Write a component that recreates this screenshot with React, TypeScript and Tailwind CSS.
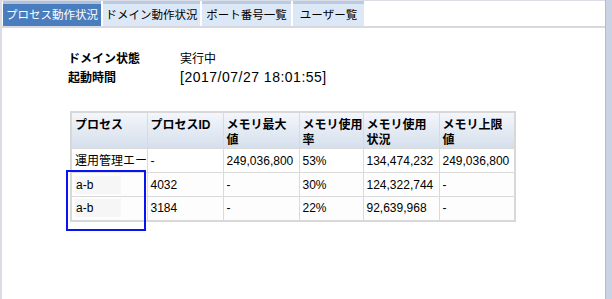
import React from "react";

const tabs = ["プロセス動作状況", "ドメイン動作状況", "ポート番号一覧", "ユーザー覧"];
const tabW = ["w-[98px]", "w-[97px]", "w-[89px]", "w-[71px]"];

const headers = [
  ["プロセス"],
  ["プロセスID"],
  ["メモリ最大", "値"],
  ["メモリ使用", "率"],
  ["メモリ使用", "状況"],
  ["メモリ上限", "値"],
];

const rows: { cells: string[]; mask?: boolean }[] = [
  { cells: ["運用管理エー", "-", "249,036,800", "53%", "134,474,232", "249,036,800"] },
  { cells: ["a-b", "4032", "-", "30%", "124,322,744", "-"], mask: true },
  { cells: ["a-b", "3184", "-", "22%", "92,639,968", "-"], mask: true },
];

const colW = ["w-[76px]", "w-[76px]", "w-[76px]", "w-[64px]", "w-[76px]", "w-[76px]"];

export default function App() {
  return (
    <div
      className="w-[612px] h-[299px] bg-white flex text-black relative overflow-hidden"
      style={{ fontFamily: '"Liberation Sans", "Noto Sans CJK JP", sans-serif' }}
    >
      <div className="flex-1 flex flex-col border-l-2 border-t border-[#dcdce4]">
        <div className="h-[27px] flex items-end pl-[1px] gap-[2px] border-b-2 border-[#d8d8e0] pt-[2px]">
          {tabs.map((t, i) => (
            <div
              key={t}
              className={`${tabW[i]} h-[25px] flex flex-col ${i === 0 ? "bg-[#4a7dbd] text-white" : "bg-[#dde8f6] text-black"}`}
            >
              <div className={`h-[3px] ${i === 0 ? "bg-[#aec3df]" : "bg-[#b7cbe4]"}`} />
              <div className="flex-1 flex items-center justify-center text-[11.5px] leading-none whitespace-nowrap pt-[1px]">
                {t}
              </div>
            </div>
          ))}
        </div>
        <div className="pl-[66px] pt-[21px] text-[12px]">
          <div className="flex h-[19px] items-center">
            <div className="w-[112px] font-bold">ドメイン状態</div>
            <div>実行中</div>
          </div>
          <div className="flex h-[19px] items-center">
            <div className="w-[112px] font-bold">起動時間</div>
            <div className="text-[14px] tracking-[0.5px]">[2017/07/27 18:01:55]</div>
          </div>
          <table className="mt-[24px] ml-[2px] w-[446px] table-fixed border-collapse border-2 border-[#d8d8d8] text-[12px]">
            <colgroup>
              {colW.map((w, i) => (
                <col key={i} className={w} />
              ))}
            </colgroup>
            <thead>
              <tr className="h-[35px]">
                {headers.map((h, i) => (
                  <th
                    key={i}
                    className="align-top text-left font-bold border border-[#dadada] bg-gradient-to-b from-[#f3f6fb] to-[#d5dfec] px-[3px] pt-[5px] leading-[15px]"
                  >
                    {h.map((l, j) => (
                      <div key={j} className="whitespace-nowrap">{l}</div>
                    ))}
                  </th>
                ))}
              </tr>
            </thead>
            <tbody>
              {rows.map((r, ri) => (
                <tr key={ri} className={`h-[24px] ${ri > 0 ? "bg-[#fdfdfd]" : "bg-white"}`}>
                  {r.cells.map((c, ci) => (
                    <td
                      key={ci}
                      className="border border-[#dadada] px-[3px] whitespace-nowrap overflow-hidden"
                    >
                      {ci === 0 && r.mask ? (
                        <span className="inline-block w-[46px] bg-[#f6f6f6] px-[1px]">{c}</span>
                      ) : (
                        c
                      )}
                    </td>
                  ))}
                </tr>
              ))}
            </tbody>
          </table>
        </div>
      </div>
      <div className="w-[7px] bg-[#cad3e4] border-l border-[#b4bccc]" />
      <div className="absolute left-[66px] top-[170px] w-[80px] h-[61px] border-2 border-[#0a14f0]" />
    </div>
  );
}
